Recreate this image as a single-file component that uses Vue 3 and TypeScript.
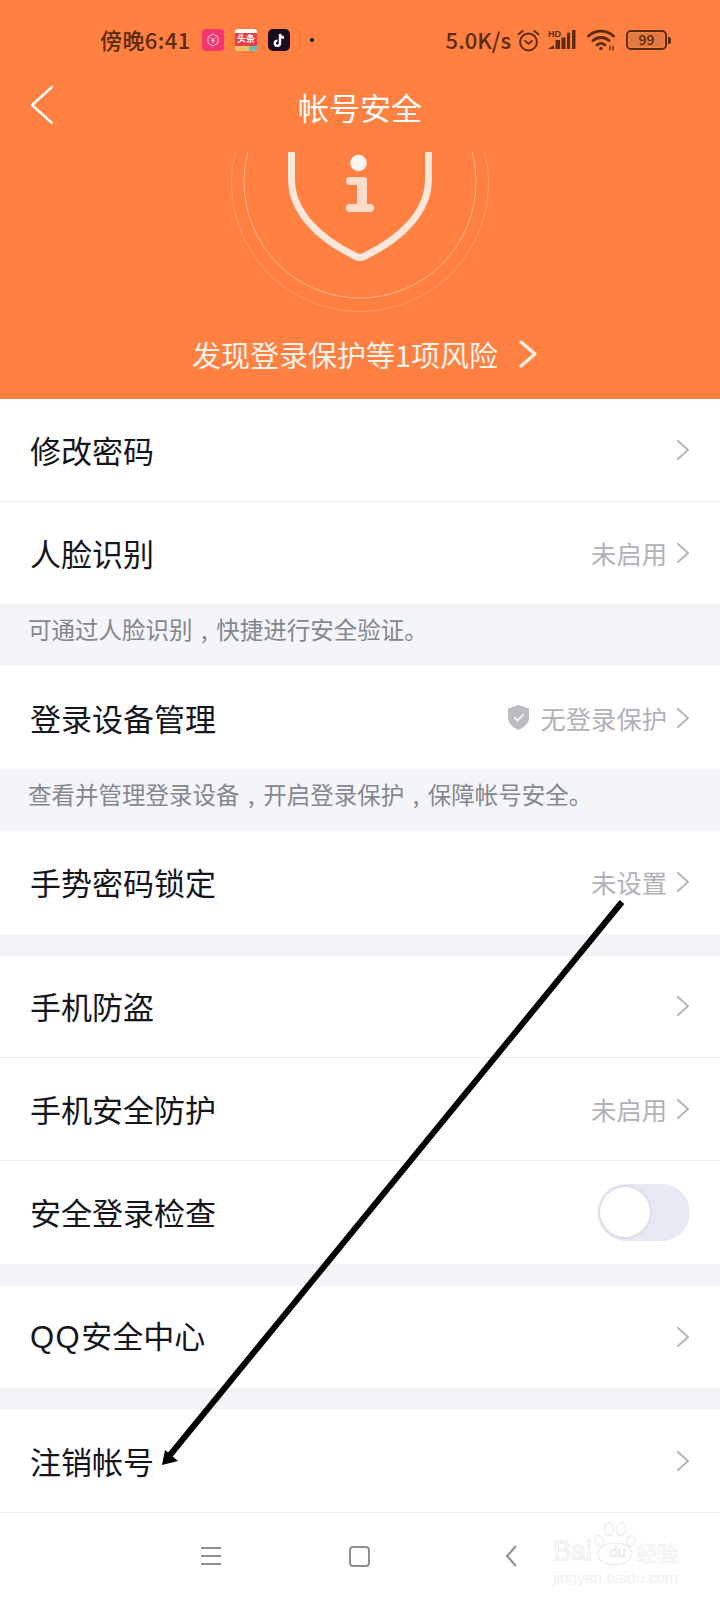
<script setup lang="ts">
interface Row {
  title: string;
  latin?: string;
  value?: string;
  shield?: boolean;
  toggle?: boolean;
  note?: string;
  gap?: boolean;
}

const rows: Row[] = [
  { title: '修改密码' },
  { title: '人脸识别', value: '未启用', note: '可通过人脸识别 , 快捷进行安全验证。' },
  { title: '登录设备管理', value: '无登录保护', shield: true, note: '查看并管理登录设备 , 开启登录保护 , 保障帐号安全。' },
  { title: '手势密码锁定', value: '未设置', gap: true },
  { title: '手机防盗' },
  { title: '手机安全防护', value: '未启用' },
  { title: '安全登录检查', toggle: true, gap: true },
  { title: '安全中心', latin: 'QQ', gap: true },
  { title: '注销帐号' }
];
</script>

<template>
  <div class="page">
    <header class="hero">
      <div class="status">
        <div class="status-left">
          <span class="time">傍晚6:41</span>
          <span class="app app-pink">
            <svg width="14" height="14" viewBox="0 0 14 14"><path d="M7 1l5 3v6l-5 3-5-3V4z" fill="none" stroke="#ffd0dc" stroke-width="1"/><path d="M5 4.500L7 7l2-2.500M7 7v3M5.400 7.600h3.200" fill="none" stroke="#ffd0dc" stroke-width="1"/></svg>
          </span>
          <span class="app app-news"><i class="news-top"></i><b>头条</b><i class="news-bottom"></i></span>
          <span class="app app-tiktok">
            <svg width="16" height="17" viewBox="0 0 16 17"><path d="M9 2v9.200a2.600 2.600 0 1 1-2.600-2.600M9 2c.3 2.200 1.600 3.500 4 3.800" fill="none" stroke="#fff" stroke-width="2.400"/></svg>
          </span>
          <span class="dot"></span>
        </div>
        <div class="status-right">
          <span class="speed">5.0K/s</span>
          <svg class="alarm" width="23" height="23" viewBox="0 0 24 24" fill="none" stroke="#5c2a0c" stroke-width="2">
            <circle cx="12" cy="13.500" r="8.800"/>
            <path d="M8.500 12.500l3.500 3 3.500-3M1.500 5.500L6 2M22.500 5.500L18 2" stroke-linecap="round"/>
          </svg>
          <svg class="signal" width="28" height="20" viewBox="0 0 28 20">
            <text x="0" y="7" class="hd">HD</text>
            <path d="M0 19l6-4v4zM7.500 19v-9H12v9zM13.500 19V7.500h4V19zM19 19V2.700h3V19zM24 19V0h3.500v19z" fill="#5c2a0c"/>
          </svg>
          <svg class="wifi" width="28" height="22" viewBox="0 0 28 22" fill="none" stroke="#5c2a0c" stroke-width="2.800" stroke-linecap="round">
            <path d="M1.500 7c7-6.500 18-6.500 25 0M6 11.500c4.500-4 11.500-4 16 0M10 16c2.500-2 5.500-2 8 0"/>
            <circle cx="14" cy="19.500" r="1.700" fill="#5c2a0c" stroke="none"/>
            <path d="M23 17v4M26 17v4" stroke-width="1.200"/>
          </svg>
          <span class="battery"><span class="battery-fill">99</span></span>
          <span class="battery-tip"></span>
        </div>
      </div>

      <div class="nav">
        <svg class="back" width="24" height="40" viewBox="0 0 24 40" fill="none" stroke="#fff" stroke-width="2.400" stroke-linecap="round" stroke-linejoin="round">
          <path d="M22 2L2 20l20 18"/>
        </svg>
        <span class="nav-title">帐号安全</span>
      </div>

      <div class="badge">
        <svg width="300" height="165" viewBox="0 0 300 165" fill="none">
          <circle cx="150" cy="30" r="116" stroke="#fff" stroke-opacity=".42" stroke-width="1"/>
          <circle cx="150" cy="31" r="128.500" stroke="#fff" stroke-opacity=".24" stroke-width="1"/>
          <path d="M81.500 0v28c.5 32 26.500 58 64.500 76.500q4 2 8 0c38-18.500 64-44.500 64.500-76.500V0" stroke="#fde6da" stroke-width="7"/>
          <circle cx="148.500" cy="11" r="8.300" fill="#fff5f0"/>
          <path d="M140 25h14a3 3 0 0 1 3 3v24h3a4 4 0 0 1 0 8h-20a4 4 0 0 1 0-8h7V33h-7a4 4 0 0 1 0-8z" fill="#fddccb"/>
        </svg>
      </div>

      <div class="risk">
        <span>发现登录保护等1项风险</span>
        <svg width="20" height="30" viewBox="0 0 20 30" fill="none" stroke="#fff3ec" stroke-width="3.200" stroke-linecap="round" stroke-linejoin="round">
          <path d="M3 3l14 12L3 27"/>
        </svg>
      </div>
    </header>

    <section class="list">
      <template v-for="row in rows" :key="row.title">
        <div class="row" :class="{ 'row-line': !row.note && !row.gap }">
          <span class="row-title"><span v-if="row.latin" class="latin">{{ row.latin }}</span>{{ row.title }}</span>
          <span v-if="row.toggle" class="toggle"><span class="knob"></span></span>
          <template v-else>
            <svg v-if="row.shield" class="shield" width="21" height="25" viewBox="0 0 21 25">
              <path d="M10.500 0L21 3.500v9c0 6-5 10-10.500 12.500C5 22.500 0 18.500 0 12.500v-9z" fill="#bcbdc2"/>
              <path d="M6 12l3.500 3.500 6-6" fill="none" stroke="#f2f2f4" stroke-width="2"/>
            </svg>
            <span v-if="row.value" class="row-value">{{ row.value }}</span>
            <svg class="chevron" width="14" height="22" viewBox="0 0 14 22" fill="none" stroke="#b4b6bc" stroke-width="2" stroke-linecap="round" stroke-linejoin="round">
              <path d="M2 2l10 9-10 9"/>
            </svg>
          </template>
        </div>
        <div v-if="row.note" class="note">{{ row.note }}</div>
        <div v-if="row.gap" class="gap"></div>
      </template>
    </section>

    <footer class="navbar">
      <span class="menu"><i></i><i></i><i></i></span>
      <span class="home"></span>
      <svg class="nav-back" width="14" height="24" viewBox="0 0 14 24" fill="none" stroke="#8e8e8e" stroke-width="2"><path d="M12 2L3 12l9 10"/></svg>
      <div class="watermark">
        <svg class="paw" width="44" height="46" viewBox="0 0 44 46" fill="none" stroke="#ebebeb" stroke-width="1.200">
          <ellipse cx="6" cy="21" rx="4" ry="5.500" transform="rotate(-25 6 21)"/>
          <ellipse cx="16" cy="9" rx="4.500" ry="6.500" transform="rotate(-10 16 9)"/>
          <ellipse cx="28" cy="9" rx="4.500" ry="6.500" transform="rotate(10 28 9)"/>
          <ellipse cx="38" cy="21" rx="4" ry="5.500" transform="rotate(25 38 21)"/>
          <ellipse cx="22" cy="34" rx="17" ry="11"/>
        </svg>
        <div class="wm-main">
          <span class="wm-bai">Bai</span>
          <span class="wm-du">du</span>
          <span class="wm-cn">经验</span>
        </div>
        <span class="wm-sub">jingyan.baidu.com</span>
      </div>
    </footer>

    <!-- 截图上手绘的箭头 -->
    <svg class="arrow" width="720" height="1600" viewBox="0 0 720 1600">
      <path d="M622 902L170 1455" stroke="#000" stroke-width="6" fill="none"/>
      <path d="M162 1465l3-15 13 11z" fill="#000"/>
    </svg>
  </div>
</template>

<style scoped>
.page {
  position: relative;
  width: 720px;
  height: 1600px;
  overflow: hidden;
  background: #fff;
  font-family: "Noto Sans CJK SC", "Noto Sans", sans-serif;
}

.hero {
  height: 399px;
  background: #ff8040;
  display: flex;
  flex-direction: column;
  align-items: center;
  box-sizing: border-box;
}

.status {
  width: 100%;
  height: 80px;
  flex: none;
  padding: 0 49px 0 100px;
  box-sizing: border-box;
  display: flex;
  justify-content: space-between;
  align-items: center;
  color: #5c2a0c;
}

.status-left,
.status-right {
  display: flex;
  align-items: center;
}

.time {
  font-size: 22px;
  font-weight: 500;
  width: 102px;
  letter-spacing: 0.4px;
  white-space: nowrap;
  margin-bottom: 2px;
}

.app {
  width: 22px;
  height: 22px;
  border-radius: 4px;
  margin-right: 11px;
  display: flex;
  align-items: center;
  justify-content: center;
  flex: none;
}

.app-pink {
  background: #f5356f;
}

.app-news {
  flex-direction: column;
  background: #f5f0e6;
  overflow: hidden;
  justify-content: flex-start;
}

.news-top {
  height: 4px;
  width: 100%;
  background: #fff;
}

.app-news b {
  flex: 1;
  width: 100%;
  background: #e8404a;
  color: #fff;
  font-size: 9px;
  line-height: 12px;
  font-weight: 700;
  text-align: center;
}

.news-bottom {
  height: 5px;
  width: 100%;
  background: linear-gradient(90deg, #f5c066 65%, #5cc4b8 65%);
}

.app-tiktok {
  background: #1c0b1e;
  border-radius: 5px;
  margin-right: 0;
}

.dot {
  width: 4px;
  height: 4px;
  border-radius: 50%;
  background: #111;
  margin-left: 20px;
}

.speed {
  font-size: 22px;
  font-weight: 500;
  margin-right: 6px;
  white-space: nowrap;
  margin-bottom: 2px;
}

.alarm {
  margin-right: 8px;
}

.signal {
  margin-right: 11px;
}

.hd {
  font-size: 9px;
  font-weight: 700;
  fill: #5c2a0c;
  font-family: "Liberation Sans", sans-serif;
}

.wifi {
  margin-right: 11px;
}

.battery {
  width: 41px;
  height: 20px;
  border: 2.500px solid #5c2a0c;
  border-radius: 5px;
  padding: 1px;
  box-sizing: border-box;
  display: flex;
}

.battery-fill {
  flex: 1;
  background: #e07a44;
  border-radius: 2px;
  font-size: 14px;
  line-height: 13px;
  text-align: center;
  font-weight: 500;
}

.battery-tip {
  width: 3px;
  height: 7px;
  margin-left: 1px;
  background: #5c2a0c;
  border-radius: 0 2px 2px 0;
}

.nav {
  position: relative;
  width: 100%;
  height: 54px;
  flex: none;
  display: flex;
  justify-content: center;
  align-items: center;
}

.back {
  position: absolute;
  left: 30px;
  top: 5px;
}

.nav-title {
  color: #fff;
  font-size: 31px;
  line-height: 40px;
}

.badge {
  margin-top: 18px;
  height: 165px;
  line-height: 0;
  flex: none;
}

.risk {
  margin-top: 15px;
  display: flex;
  align-items: center;
  gap: 20px;
  color: #fff3ec;
  font-size: 29px;
  line-height: 44px;
  padding-left: 10px;
}

.row {
  height: 102.670px;
  box-sizing: border-box;
  display: flex;
  align-items: center;
  padding: 0 30px 0 30px;
  background: #fff;
}

.row-line {
  border-bottom: 1px solid #ededf0;
}

.row-title {
  flex: 1;
  font-size: 31px;
  line-height: 40px;
  color: #15151c;
}

.latin {
  font-family: "Liberation Sans", sans-serif;
  letter-spacing: 1.500px;
}

.row-value {
  font-size: 25.300px;
  line-height: 36px;
  color: #b0b2b8;
  margin-right: 9px;
}

.shield {
  margin-right: 12px;
}

.note {
  height: 62px;
  box-sizing: border-box;
  padding-left: 28px;
  background: #f4f5f9;
  color: #85878e;
  font-size: 23.500px;
  line-height: 50px;
  word-spacing: 3.300px;
}

.gap {
  height: 22px;
  background: #f4f5f9;
}

.toggle {
  position: relative;
  width: 92px;
  height: 57px;
  border-radius: 29px;
  background: #e7eaf5;
}

.knob {
  position: absolute;
  left: 2px;
  top: 3px;
  width: 50px;
  height: 50px;
  border-radius: 50%;
  background: #fff;
  box-shadow: 0 0 3px 1px #d2d4de;
}

.navbar {
  position: relative;
  height: 87px;
  display: flex;
  align-items: center;
  padding-left: 201px;
  box-sizing: border-box;
  background: #fff;
}

.menu {
  width: 20px;
  display: flex;
  flex-direction: column;
  gap: 6px;
}

.menu i {
  height: 2px;
  background: #8e8e8e;
}

.home {
  width: 17px;
  height: 17px;
  margin-left: 128px;
  border: 2px solid #8e8e8e;
  border-radius: 4px;
}

.nav-back {
  margin-left: 134px;
}

.watermark {
  position: absolute;
  left: 553px;
  top: 26px;
  width: 128px;
}

.paw {
  position: absolute;
  left: 40px;
  top: -19px;
}

.wm-main {
  display: flex;
  align-items: center;
  height: 26px;
  color: #fff;
  font-family: "Liberation Sans", "Noto Sans CJK SC", sans-serif;
  -webkit-text-stroke: 1px #ebebeb;
  white-space: nowrap;
}

.wm-bai {
  font-size: 27px;
  width: 46px;
}

.wm-du {
  font-size: 15px;
  width: 37px;
  text-align: center;
  -webkit-text-stroke: 0.800px #ebebeb;
}

.wm-cn {
  font-size: 21px;
  -webkit-text-stroke: 0.600px #ebebeb;
}

.wm-sub {
  display: block;
  margin-top: 4px;
  font-family: "Liberation Sans", sans-serif;
  font-size: 15.500px;
  line-height: 18px;
  color: #f0f0f0;
  white-space: nowrap;
}

.arrow {
  position: absolute;
  left: 0;
  top: 0;
  pointer-events: none;
}
</style>

<style>
html,
body {
  margin: 0;
  background: #fff;
}
</style>
